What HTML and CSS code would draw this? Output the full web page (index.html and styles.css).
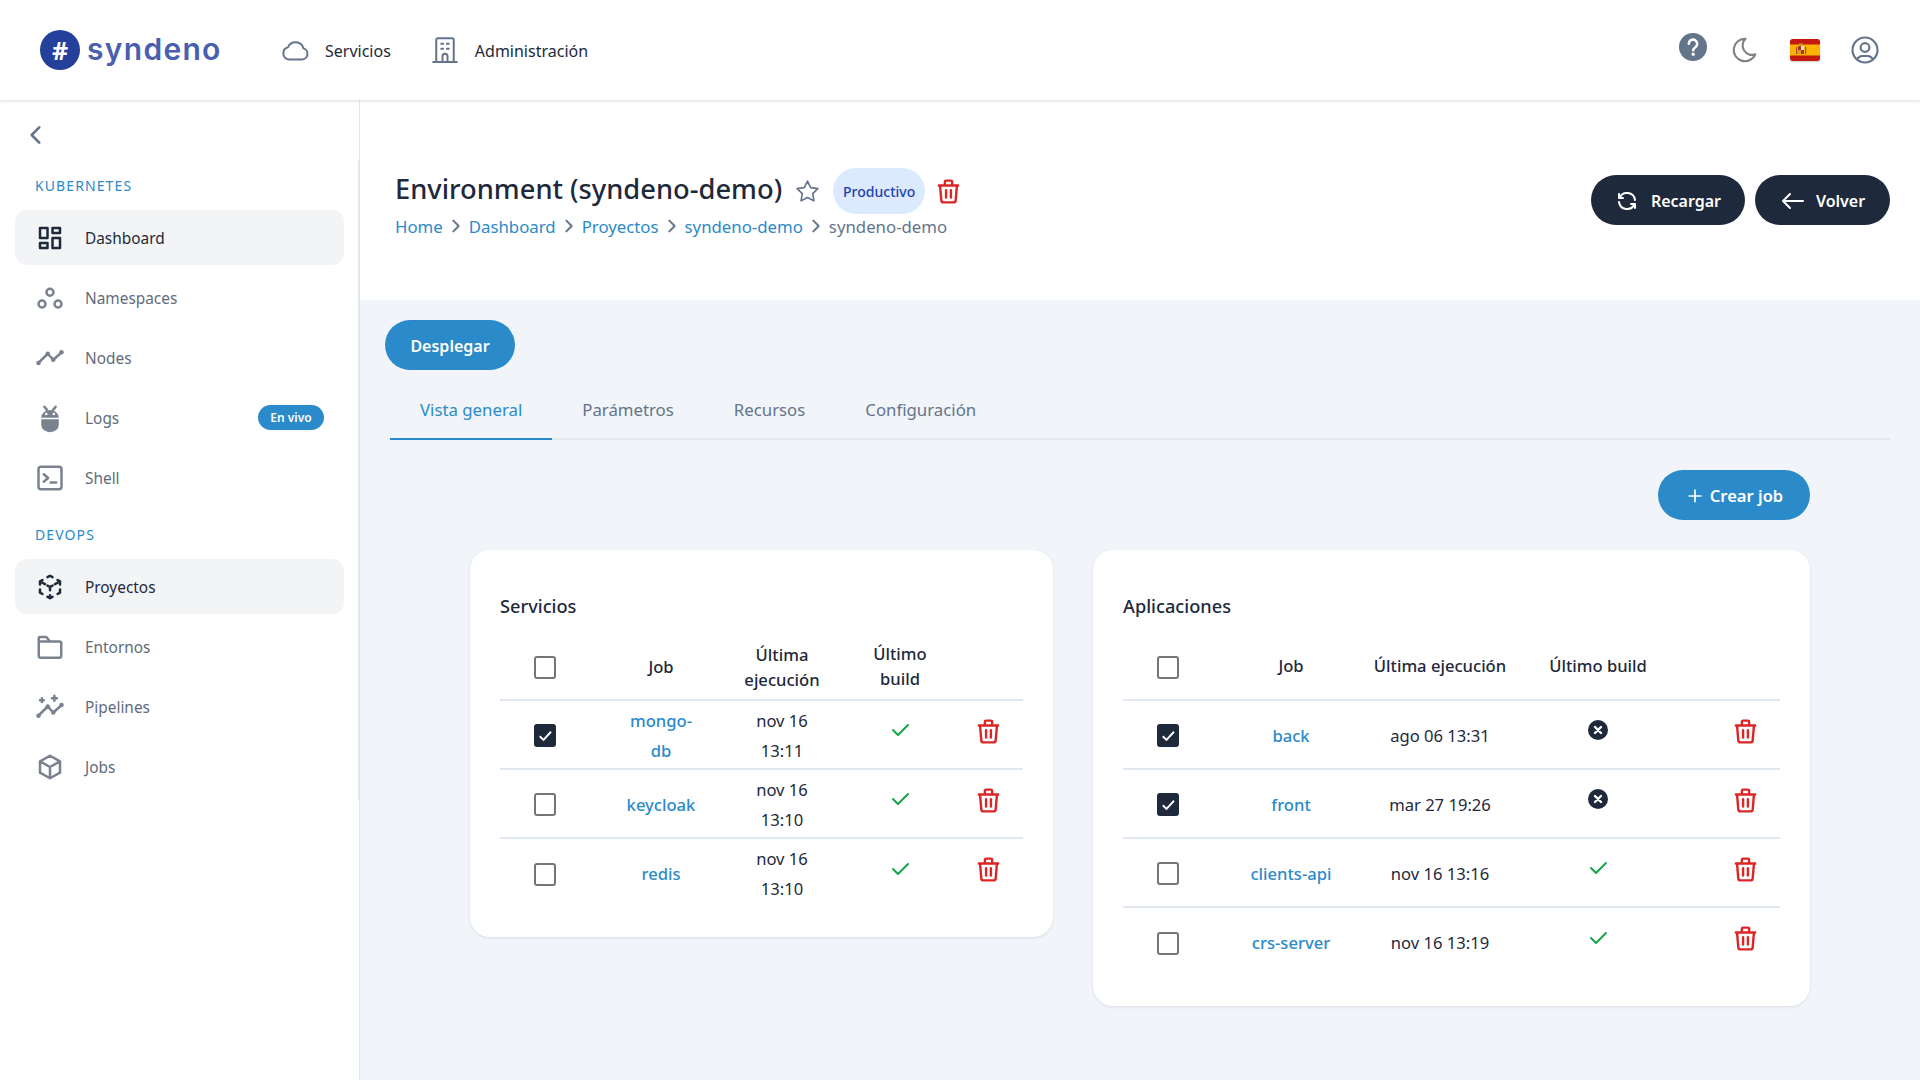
FILE: index.html
```html
<!DOCTYPE html>
<html lang="es">
<head>
    <meta charset="UTF-8">
    <title>Syndeno - Environment</title>
    <link rel="stylesheet" href="styles.css">
</head>
<body>

    <!-- Top bar -->
    <header class="topbar">
        <div class="logo">
            <span class="logo-mark">#</span>
            <span class="logo-text">syndeno</span>
        </div>
        <nav class="topnav">
            <a class="topnav-item">
                <svg class="ic ic-top" viewBox="0 0 24 24"><path d="M7 19.500h10.500a4.500 4.500 0 0 0 1.300-8.800A6.600 6.600 0 0 0 6.300 9.900 4.900 4.900 0 0 0 7 19.500z"/></svg>
                Servicios
            </a>
            <a class="topnav-item">
                <svg class="ic ic-top" viewBox="0 0 24 24"><path d="M2.500 21.500h19M5 21.500V4a1.500 1.500 0 0 1 1.500-1.500h11A1.500 1.500 0 0 1 19 4v17.500M10 21.500V17a2 2 0 0 1 4 0v4.500M9 7h1.500M13.500 7H15M9 11h1.500M13.500 11H15"/></svg>
                Administración
            </a>
        </nav>
        <div class="top-actions">
            <svg class="help" viewBox="0 0 28 28"><circle cx="14" cy="14" r="14"/><path d="M9.800 10.800a4.200 4.200 0 1 1 6.500 3.500c-1.300.9-2.100 1.500-2.100 2.900"/><circle class="dot" cx="14.200" cy="21.300" r="1.700"/></svg>
            <svg class="ic moon" viewBox="0 0 24 24"><path d="M12 3h.4a7.500 7.500 0 0 0 7.900 12.400A9 9 0 1 1 12 3z"/></svg>
            <svg class="flag" viewBox="0 0 30 22">
                <rect width="30" height="22" rx="2" fill="#c5190f"/>
                <rect y="5.500" width="30" height="11" fill="#fbb200"/>
                <rect x="8" y="7" width="6" height="8" rx="1" fill="#b5301c"/>
                <rect x="11" y="7" width="3" height="4" fill="#e9e2cf"/>
                <rect x="8" y="11" width="3" height="4" fill="#d9a020"/>
                <rect x="6" y="8" width="1.200" height="7" fill="#a8502c"/>
                <rect x="15" y="8" width="1.200" height="7" fill="#a8502c"/>
                <rect x="9" y="4.500" width="4" height="2" fill="#b89a30"/>
            </svg>
            <svg class="ic user" viewBox="0 0 24 24"><circle cx="12" cy="12" r="10"/><circle cx="12" cy="10" r="3.500"/><path d="M5.600 19.500a5 5 0 0 1 4.400-2.700h4a5 5 0 0 1 4.400 2.700"/></svg>
        </div>
    </header>

    <div class="layout">
        <!-- Sidebar -->
        <aside class="sidebar">
            <svg class="ic collapse" viewBox="0 0 24 24"><path d="M15 5l-7 7 7 7"/></svg>

            <div class="side-title side-title-first">Kubernetes</div>
            <a class="side-item active">
                <svg class="ic" viewBox="0 0 24 24"><path d="M4 4h6v8H4zM4 16h6v4H4zM14 12h6v8h-6zM14 4h6v4h-6z"/></svg>
                Dashboard
            </a>
            <a class="side-item">
                <svg class="ic" viewBox="0 0 24 24"><circle cx="12" cy="7.400" r="2.800"/><circle cx="5.600" cy="16.800" r="2.800"/><circle cx="18.400" cy="16.800" r="2.800"/></svg>
                Namespaces
            </a>
            <a class="side-item">
                <svg class="ic" viewBox="0 0 24 24"><path d="M2.600 16l7.600-7.400 4.400 4.800 6.800-6"/><circle class="solid" cx="2.800" cy="16" r="1.800"/><circle class="solid" cx="10.200" cy="8.600" r="1.800"/><circle class="solid" cx="14.600" cy="13.400" r="1.800"/><circle class="solid" cx="21.200" cy="7.400" r="1.800"/></svg>
                Nodes
            </a>
            <a class="side-item">
                <svg class="ic" viewBox="0 0 24 24"><path class="solid" d="M5 11.800a7 6.300 0 0 1 14 0zM5 13h14v4.500a7 5.800 0 0 1-14 0z"/><path d="M7.500 3l2 2.500M16.500 3l-2 2.500"/><circle class="eye" cx="9" cy="8.800" r="1"/><circle class="eye" cx="15" cy="8.800" r="1"/></svg>
                Logs
                <span class="live">En vivo</span>
            </a>
            <a class="side-item">
                <svg class="ic" viewBox="0 0 24 24"><rect x="2.800" y="3" width="18.400" height="18" rx="2"/><path d="M7 9l3.500 3L7 15M12.500 15.500H17"/></svg>
                Shell
            </a>

            <div class="side-title">DevOps</div>
            <a class="side-item active">
                <svg class="ic" viewBox="0 0 24 24"><path d="M6 17.600l-2-1.100V14M4 10V7.500l2-1.100M10 4.100l2-1.100 2 1.100M18 6.400l2 1.100V10M20 14v2.500l-2 1.100M14 19.900L12 21l-2-1.100M12 12l2-1.100M18 8.600l-2 1.100M12 12v2.500M12 18.500V21M12 12l-2-1.100M6 8.600l2 1.100"/></svg>
                Proyectos
            </a>
            <a class="side-item">
                <svg class="ic" viewBox="0 0 24 24"><path d="M3 6.500V19a1.500 1.500 0 0 0 1.500 1.500h15A1.500 1.500 0 0 0 21 19V9a1.500 1.500 0 0 0-1.500-1.500H3zM3 7V5a1 1 0 0 1 1-1h5l2.500 3"/></svg>
                Entornos
            </a>
            <a class="side-item">
                <svg class="ic" viewBox="0 0 24 24"><path d="M2.600 19l7.600-7.400 4.400 4.800 6.800-6M4 6.500h3M5.500 5v3"/><path d="M15.500 3v4M13.500 5h4"/><circle class="solid" cx="2.800" cy="19" r="1.800"/><circle class="solid" cx="10.200" cy="11.600" r="1.800"/><circle class="solid" cx="14.600" cy="16.400" r="1.800"/><circle class="solid" cx="21.200" cy="10.400" r="1.800"/></svg>
                Pipelines
            </a>
            <a class="side-item">
                <svg class="ic" viewBox="0 0 24 24"><path d="M12 3l8 4.500v9L12 21l-8-4.500v-9L12 3M12 12l8-4.500M12 12v9M12 12L4 7.500"/></svg>
                Jobs
            </a>
        </aside>

        <main class="main">
            <!-- Page heading -->
            <section class="page-head">
                <div>
                    <div class="title-row">
                        <h1>Environment (syndeno-demo)</h1>
                        <svg class="ic star" viewBox="0 0 24 24"><path d="M12 17.750l-6.172 3.245 1.179-6.873-5-4.867 6.900-1L12 2l3.086 6.253 6.900 1-5 4.867 1.179 6.873z"/></svg>
                        <span class="badge">Productivo</span>
                        <svg class="ic trash" viewBox="0 0 24 24"><path d="M4 7h16M10 11v6M14 11v6M5 7l1 12a2 2 0 0 0 2 2h8a2 2 0 0 0 2-2l1-12M9 7V4a1 1 0 0 1 1-1h4a1 1 0 0 1 1 1v3"/></svg>
                    </div>
                    <div class="crumbs">
                        <a>Home</a><svg class="ic sep" viewBox="0 0 24 24"><path d="M8 4l8 8-8 8"/></svg>
                        <a>Dashboard</a><svg class="ic sep" viewBox="0 0 24 24"><path d="M8 4l8 8-8 8"/></svg>
                        <a>Proyectos</a><svg class="ic sep" viewBox="0 0 24 24"><path d="M8 4l8 8-8 8"/></svg>
                        <a>syndeno-demo</a><svg class="ic sep" viewBox="0 0 24 24"><path d="M8 4l8 8-8 8"/></svg>
                        <span>syndeno-demo</span>
                    </div>
                </div>
                <div class="head-buttons">
                    <button class="btn btn-dark btn-reload">
                        <svg class="ic" viewBox="0 0 24 24"><path d="M20 11a8.100 8.100 0 0 0-15.500-2M4 5v4h4M4 13a8.100 8.100 0 0 0 15.500 2M20 19v-4h-4"/></svg>
                        Recargar
                    </button>
                    <button class="btn btn-dark btn-back">
                        <svg class="ic" viewBox="0 0 24 24"><path d="M3 12h20M3 12l7 7M3 12l7-7"/></svg>
                        Volver
                    </button>
                </div>
            </section>

            <section class="content">
                <button class="btn btn-blue btn-deploy">Desplegar</button>

                <div class="tabs">
                    <a class="tab tab-active">Vista general</a>
                    <a class="tab">Parámetros</a>
                    <a class="tab">Recursos</a>
                    <a class="tab">Configuración</a>
                </div>

                <div class="job-actions">
                    <button class="btn btn-blue btn-create">
                        <svg class="ic" viewBox="0 0 24 24"><path d="M12 5v14M5 12h14"/></svg>
                        Crear job
                    </button>
                </div>

                <div class="cards">
                    <!-- Servicios -->
                    <div class="card card-services">
                        <h2>Servicios</h2>
                        <table class="jobs">
                            <thead>
                                <tr>
                                    <th class="c-check"><span class="check"></span></th>
                                    <th class="c-job">Job</th>
                                    <th class="c-date">Última ejecución</th>
                                    <th class="c-build">Último build</th>
                                    <th class="c-del"></th>
                                </tr>
                            </thead>
                            <tbody>
                                <tr>
                                    <td><span class="check checked"><svg viewBox="0 0 24 24"><path d="M5 13l5 5 10-11"/></svg></span></td>
                                    <td class="c-job"><a>mongo-db</a></td>
                                    <td class="c-date">nov 16 13:11</td>
                                    <td class="c-icon"><svg class="ic ok" viewBox="0 0 24 24"><path d="M5 12l5 5L20 7"/></svg></td>
                                    <td class="c-icon c-del"><svg class="ic trash" viewBox="0 0 24 24"><path d="M4 7h16M10 11v6M14 11v6M5 7l1 12a2 2 0 0 0 2 2h8a2 2 0 0 0 2-2l1-12M9 7V4a1 1 0 0 1 1-1h4a1 1 0 0 1 1 1v3"/></svg></td>
                                </tr>
                                <tr>
                                    <td><span class="check"></span></td>
                                    <td class="c-job"><a>keycloak</a></td>
                                    <td class="c-date">nov 16 13:10</td>
                                    <td class="c-icon"><svg class="ic ok" viewBox="0 0 24 24"><path d="M5 12l5 5L20 7"/></svg></td>
                                    <td class="c-icon c-del"><svg class="ic trash" viewBox="0 0 24 24"><path d="M4 7h16M10 11v6M14 11v6M5 7l1 12a2 2 0 0 0 2 2h8a2 2 0 0 0 2-2l1-12M9 7V4a1 1 0 0 1 1-1h4a1 1 0 0 1 1 1v3"/></svg></td>
                                </tr>
                                <tr>
                                    <td><span class="check"></span></td>
                                    <td class="c-job"><a>redis</a></td>
                                    <td class="c-date">nov 16 13:10</td>
                                    <td class="c-icon"><svg class="ic ok" viewBox="0 0 24 24"><path d="M5 12l5 5L20 7"/></svg></td>
                                    <td class="c-icon c-del"><svg class="ic trash" viewBox="0 0 24 24"><path d="M4 7h16M10 11v6M14 11v6M5 7l1 12a2 2 0 0 0 2 2h8a2 2 0 0 0 2-2l1-12M9 7V4a1 1 0 0 1 1-1h4a1 1 0 0 1 1 1v3"/></svg></td>
                                </tr>
                            </tbody>
                        </table>
                    </div>

                    <!-- Aplicaciones -->
                    <div class="card card-apps">
                        <h2>Aplicaciones</h2>
                        <table class="jobs">
                            <thead>
                                <tr>
                                    <th class="c-check"><span class="check"></span></th>
                                    <th class="c-job">Job</th>
                                    <th class="c-date">Última ejecución</th>
                                    <th class="c-build">Último build</th>
                                    <th class="c-del"></th>
                                </tr>
                            </thead>
                            <tbody>
                                <tr>
                                    <td><span class="check checked"><svg viewBox="0 0 24 24"><path d="M5 13l5 5 10-11"/></svg></span></td>
                                    <td class="c-job"><a>back</a></td>
                                    <td class="c-date">ago 06 13:31</td>
                                    <td class="c-icon"><svg class="fail" viewBox="0 0 20 20"><circle cx="10" cy="10" r="10"/><path d="M7 7l6 6M13 7l-6 6"/></svg></td>
                                    <td class="c-icon c-del"><svg class="ic trash" viewBox="0 0 24 24"><path d="M4 7h16M10 11v6M14 11v6M5 7l1 12a2 2 0 0 0 2 2h8a2 2 0 0 0 2-2l1-12M9 7V4a1 1 0 0 1 1-1h4a1 1 0 0 1 1 1v3"/></svg></td>
                                </tr>
                                <tr>
                                    <td><span class="check checked"><svg viewBox="0 0 24 24"><path d="M5 13l5 5 10-11"/></svg></span></td>
                                    <td class="c-job"><a>front</a></td>
                                    <td class="c-date">mar 27 19:26</td>
                                    <td class="c-icon"><svg class="fail" viewBox="0 0 20 20"><circle cx="10" cy="10" r="10"/><path d="M7 7l6 6M13 7l-6 6"/></svg></td>
                                    <td class="c-icon c-del"><svg class="ic trash" viewBox="0 0 24 24"><path d="M4 7h16M10 11v6M14 11v6M5 7l1 12a2 2 0 0 0 2 2h8a2 2 0 0 0 2-2l1-12M9 7V4a1 1 0 0 1 1-1h4a1 1 0 0 1 1 1v3"/></svg></td>
                                </tr>
                                <tr>
                                    <td><span class="check"></span></td>
                                    <td class="c-job"><a>clients-api</a></td>
                                    <td class="c-date">nov 16 13:16</td>
                                    <td class="c-icon"><svg class="ic ok" viewBox="0 0 24 24"><path d="M5 12l5 5L20 7"/></svg></td>
                                    <td class="c-icon c-del"><svg class="ic trash" viewBox="0 0 24 24"><path d="M4 7h16M10 11v6M14 11v6M5 7l1 12a2 2 0 0 0 2 2h8a2 2 0 0 0 2-2l1-12M9 7V4a1 1 0 0 1 1-1h4a1 1 0 0 1 1 1v3"/></svg></td>
                                </tr>
                                <tr>
                                    <td><span class="check"></span></td>
                                    <td class="c-job"><a>crs-server</a></td>
                                    <td class="c-date">nov 16 13:19</td>
                                    <td class="c-icon"><svg class="ic ok" viewBox="0 0 24 24"><path d="M5 12l5 5L20 7"/></svg></td>
                                    <td class="c-icon c-del"><svg class="ic trash" viewBox="0 0 24 24"><path d="M4 7h16M10 11v6M14 11v6M5 7l1 12a2 2 0 0 0 2 2h8a2 2 0 0 0 2-2l1-12M9 7V4a1 1 0 0 1 1-1h4a1 1 0 0 1 1 1v3"/></svg></td>
                                </tr>
                            </tbody>
                        </table>
                    </div>
                </div>
            </section>
        </main>
    </div>

</body>
</html>
```

FILE: styles.css
```css
* {
    box-sizing: border-box;
}

html,
body {
    margin: 0;
    height: 100%;
    overflow: hidden;
}

body {
    font-family: "Noto Sans", sans-serif;
    font-size: 16px;
    color: #1e293b;
    background-color: #f1f5f9;
    display: flex;
    flex-direction: column;
}

/* shared line icon */
.ic {
    fill: none;
    stroke: currentColor;
    stroke-width: 2;
    stroke-linecap: round;
    stroke-linejoin: round;
    flex-shrink: 0;
}

/* Top bar */
.topbar {
    height: 100px;
    flex-shrink: 0;
    background-color: #fff;
    display: flex;
    align-items: center;
    padding: 0 40px;
    box-shadow: 0 1px 3px rgba(0, 0, 0, 0.15);
    position: relative;
    z-index: 2;
}

.logo {
    display: flex;
    align-items: center;
    gap: 7px;
    width: 240px;
}

.logo-mark {
    width: 40px;
    height: 40px;
    border-radius: 50%;
    background-color: #24409a;
    color: #fff;
    font-size: 25px;
    font-weight: 700;
    display: flex;
    align-items: center;
    justify-content: center;
}

.logo-text {
    font-family: "Inter", sans-serif;
    font-size: 30px;
    font-weight: 600;
    letter-spacing: 1.3px;
    color: #4a5fae;
    line-height: 40px;
    margin-top: -2px;
}

.topnav {
    display: flex;
    gap: 39px;
}

.topnav-item {
    display: flex;
    align-items: center;
    gap: 15px;
    padding-top: 2px;
}

.ic-top {
    width: 30px;
    height: 30px;
    margin-top: -2px;
    stroke-width: 1.6;
    color: #64748b;
}

.top-actions {
    margin-left: auto;
    display: flex;
    align-items: center;
}

.help {
    width: 28px;
    height: 28px;
    margin-top: -6px;
    fill: #64748b;
}

.help path {
    fill: none;
    stroke: #fff;
    stroke-width: 2.6;
    stroke-linecap: round;
}

.help .dot {
    fill: #fff;
}

.moon {
    width: 30px;
    height: 30px;
    margin: -1px 0 0 23px;
    stroke-width: 1.7;
    color: #808080;
}

.flag {
    width: 30px;
    height: 22px;
    margin-left: 30px;
    box-shadow: 0 1px 2px rgba(0, 0, 0, 0.2);
    border-radius: 2px;
}

.user {
    width: 30px;
    height: 30px;
    margin-left: 30px;
    stroke-width: 1.7;
    color: #64748b;
}

/* Layout */
.layout {
    flex: 1;
    display: flex;
    min-height: 0;
}

/* Sidebar */
.sidebar {
    width: 360px;
    flex-shrink: 0;
    background-color: #fff;
    border-right: 1px solid #e5e7eb;
    padding: 22px 15px 0;
    position: relative;
    font-size: 15.4px;
}

.sidebar::after {
    content: "";
    position: absolute;
    top: 60px;
    right: -1px;
    width: 2px;
    height: 640px;
    background-color: #e2e8f0;
}

.collapse {
    display: block;
    width: 26px;
    height: 26px;
    margin-left: 8px;
    color: #64748b;
    stroke-width: 2.4;
}

.side-title {
    color: #2b8ac9;
    font-size: 14px;
    letter-spacing: 1.1px;
    text-transform: uppercase;
    line-height: 20px;
    padding-left: 20px;
    margin: 20px 0 14px;
}

.side-title.side-title-first {
    margin: 28px 0 14px;
}

.side-title + .side-item {
    margin-top: 0;
}

.side-item {
    height: 55px;
    margin-top: 5px;
    border-radius: 12px;
    padding: 2px 20px 0;
    display: flex;
    align-items: center;
    gap: 20px;
    color: #5f6b7a;
}

.side-item .ic {
    width: 30px;
    height: 30px;
    margin-top: -2px;
    color: #7a828f;
}

.side-item .solid {
    fill: currentColor;
    stroke: none;
}

.side-item .eye {
    fill: #fff;
    stroke: none;
}

.side-item.active {
    background-color: #f3f4f6;
    color: #1e293b;
}

.side-item.active .ic {
    color: #1e293b;
}

.live {
    margin: -2px 0 0 auto;
    height: 25px;
    width: 66px;
    border-radius: 13px;
    background-color: #2b8ac9;
    color: #fff;
    font-size: 12px;
    font-weight: 600;
    display: flex;
    align-items: center;
    justify-content: center;
}

/* Main */
.main {
    flex: 1;
    min-width: 0;
}

.page-head {
    height: 200px;
    background-color: #fff;
    padding: 68px 30px 0 35px;
    display: flex;
    justify-content: space-between;
}

.title-row {
    display: flex;
    align-items: center;
    height: 46px;
}

h1 {
    margin: 0 0 5px;
    font-size: 27.3px;
    font-weight: 500;
    line-height: 40px;
    white-space: nowrap;
}

.star {
    width: 25px;
    height: 25px;
    margin-left: 13px;
    color: #64748b;
    stroke-width: 1.6;
}

.badge {
    height: 46px;
    width: 92px;
    margin-left: 13px;
    border-radius: 23px;
    background-color: #dbeafe;
    color: #1e40af;
    font-size: 14px;
    font-weight: 500;
    display: flex;
    align-items: center;
    justify-content: center;
}

.trash {
    width: 29px;
    height: 29px;
    color: #dc2626;
}

.title-row .trash {
    margin-left: 9px;
}

.crumbs {
    display: flex;
    align-items: center;
    height: 24px;
    font-size: 16.8px;
    color: #64748b;
}

.crumbs a {
    color: #2b8ac9;
}

.sep {
    width: 16px;
    height: 16px;
    margin: 0 5px;
    stroke-width: 3;
    color: #64748b;
}

.head-buttons {
    display: flex;
    gap: 10px;
    padding-top: 7px;
}

.btn {
    height: 50px;
    border: none;
    border-radius: 25px;
    padding: 1px 0 0;
    color: #fff;
    font-family: inherit;
    font-size: 16px;
    font-weight: 600;
    display: flex;
    align-items: center;
    justify-content: center;
}

.btn-dark {
    background-color: #1e293b;
}

.btn-blue {
    background-color: #2b8ac9;
}

.btn-reload {
    width: 154px;
    gap: 12px;
}

.btn-back {
    width: 135px;
    gap: 12px;
}

.btn .ic {
    width: 24px;
    height: 24px;
}

.btn-deploy {
    width: 130px;
}

.content {
    padding: 20px 30px 0 25px;
}

/* Tabs */
.tabs {
    display: flex;
    margin: 15px 0 0 5px;
    border-bottom: 2px solid #e2e8f0;
    height: 55px;
    font-size: 16.8px;
    color: #64748b;
}

.tab {
    padding: 0 30px;
    height: 55px;
    line-height: 50px;
}

.tab-active {
    color: #2b8ac9;
    border-bottom: 2px solid #2b8ac9;
}

.job-actions {
    display: flex;
    justify-content: flex-end;
    padding-right: 80px;
    margin-top: 30px;
}

.btn-create {
    width: 152px;
    gap: 5px;
    font-size: 16.5px;
}

.btn-create .ic {
    width: 20px;
    height: 20px;
}

/* Job cards */
.cards {
    display: flex;
    align-items: flex-start;
    gap: 40px;
    margin: 30px 80px 0 85px;
}

.card {
    background-color: #fff;
    border-radius: 20px;
    padding: 30px;
    box-shadow: 0 1px 3px rgba(0, 0, 0, 0.1);
}

.card-services {
    width: 583px;
}

.card-apps {
    width: 717px;
}

h2 {
    margin: 12px 0;
    font-size: 18.2px;
    font-weight: 500;
    line-height: 28px;
}

.jobs {
    width: 100%;
    border-collapse: collapse;
    table-layout: fixed;
    text-align: center;
    font-size: 16.6px;
}

.jobs th {
    font-weight: 500;
    line-height: 25px;
    height: 68px;
    padding: 8px 0;
    border-bottom: 2px solid #e2e8f0;
}

.jobs td {
    height: 69px;
    padding: 2px 0 0;
    line-height: 30px;
    border-bottom: 2px solid #e2e8f0;
}

.jobs tr:last-child td {
    border-bottom: none;
}

.jobs a {
    color: #2b8ac9;
    font-weight: 500;
}

.card-services .c-check {
    width: 90px;
}

.card-services .c-job {
    width: 142px;
    padding: 2px 30px 0;
}

.card-services .c-date {
    width: 100px;
    padding: 2px 6px 0;
}

.card-services .c-build {
    width: 136px;
    padding: 0 28px;
}

.card-apps .c-check {
    width: 90px;
}

.card-apps .c-job {
    width: 156px;
}

.card-apps .c-date {
    width: 142px;
}

.card-apps .c-build {
    width: 174px;
}

.jobs .c-icon {
    padding: 0 0 9px;
}

.jobs .c-del {
    text-align: right;
    padding-right: 20px;
}

.check {
    display: inline-flex;
    width: 22px;
    height: 23px;
    border: 2px solid #757575;
    border-radius: 3px;
    vertical-align: middle;
}

.jobs td .check {
    margin-bottom: 3px;
}

.check svg {
    width: 100%;
    height: 100%;
    fill: none;
    stroke: #fff;
    stroke-width: 2.5;
}

.check.checked {
    background-color: #1e293b;
    border-color: #1e293b;
}

.ok {
    width: 24px;
    height: 24px;
    margin-bottom: 3px;
    color: #16a34a;
}

.fail {
    width: 20px;
    height: 20px;
    margin-bottom: 3px;
    fill: #1e293b;
}

.fail path {
    stroke: #fff;
    stroke-width: 2.4;
    stroke-linecap: round;
}

.jobs svg {
    vertical-align: middle;
}
```
